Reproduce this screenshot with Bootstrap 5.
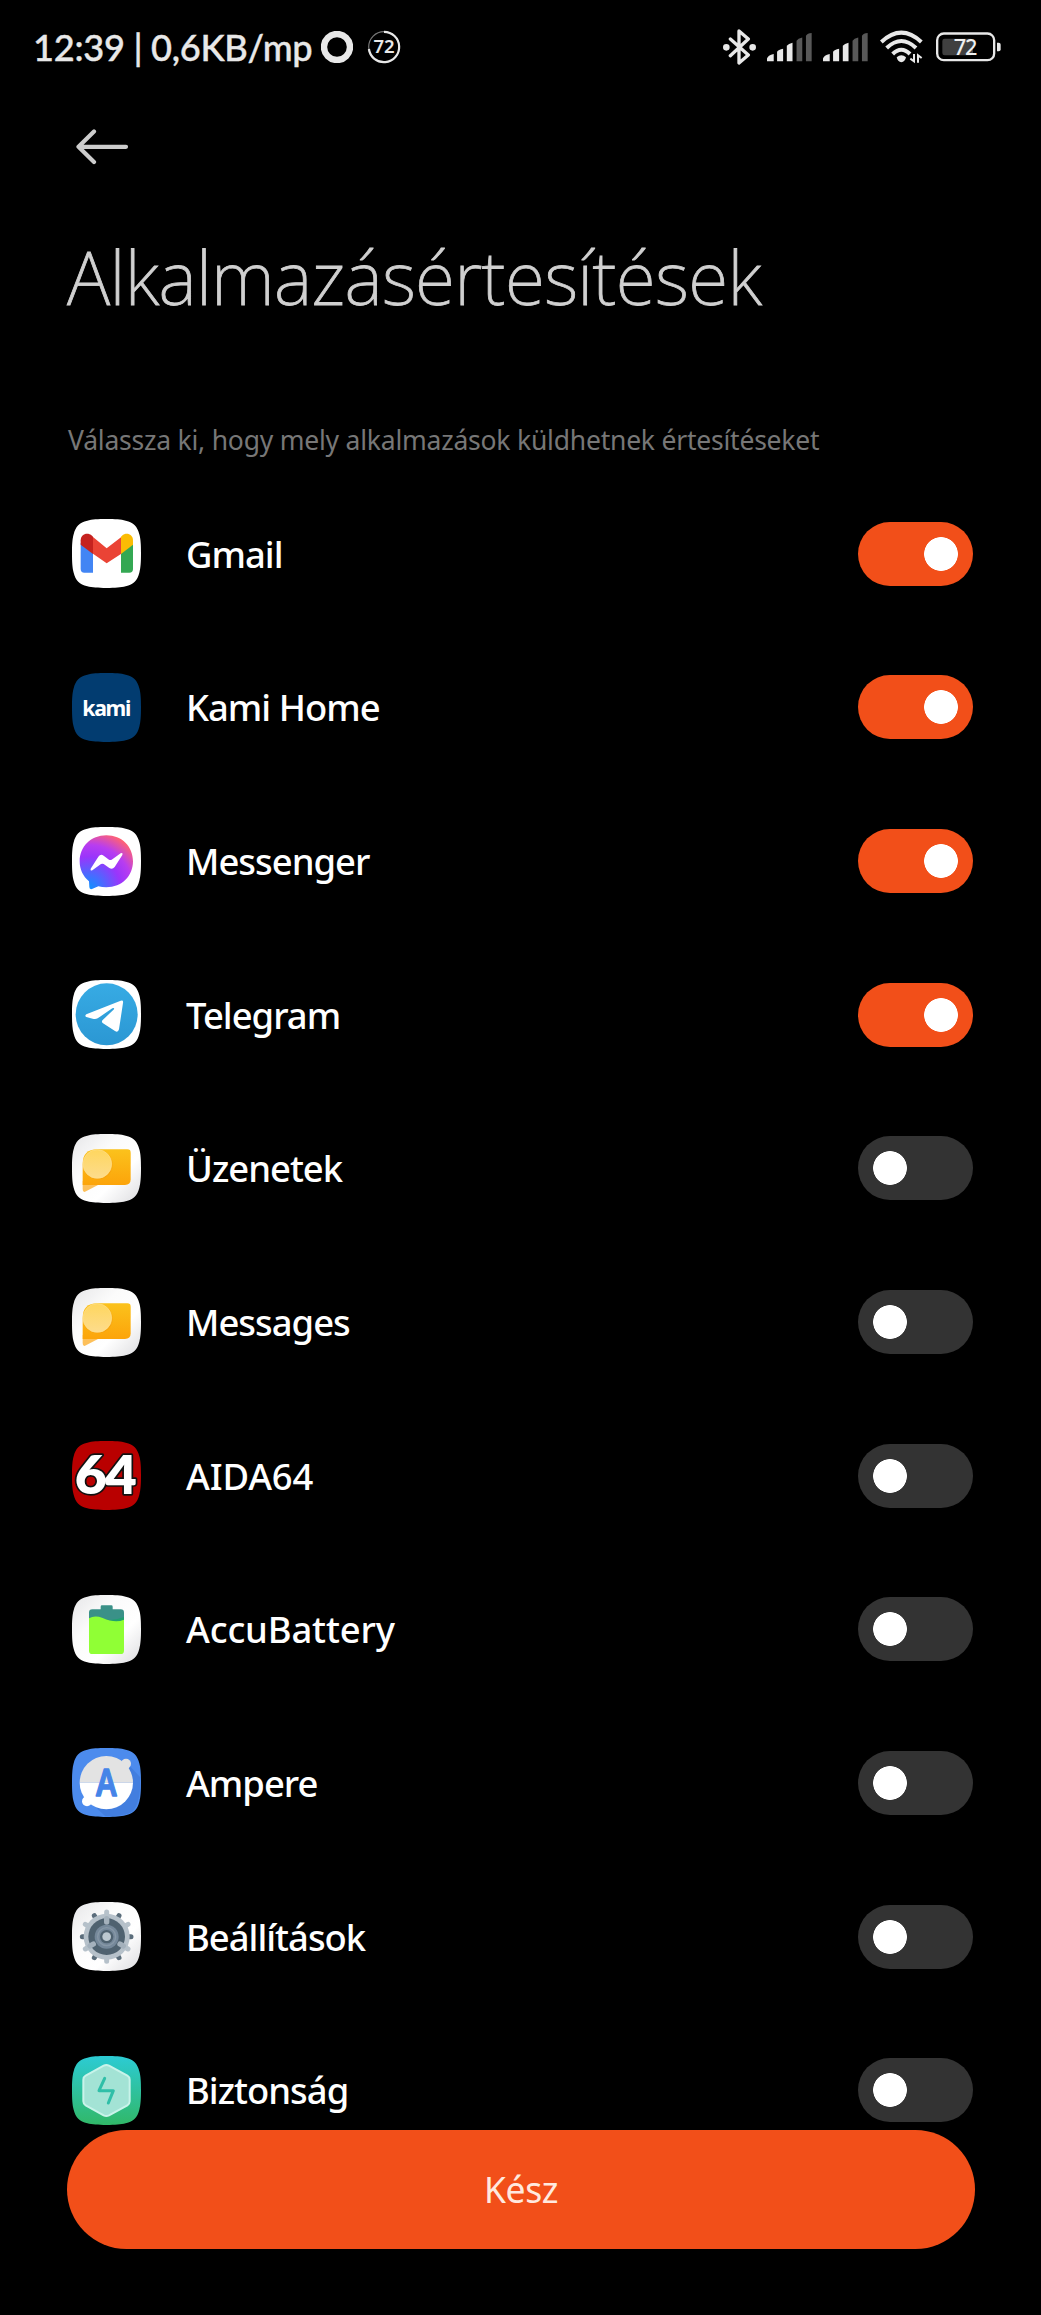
<!DOCTYPE html>
<html lang="hu">

<head>
    <meta charset="UTF-8">
    <meta name="viewport" content="width=device-width, initial-scale=1.0">
    <title>Alkalmazásértesítések</title>
    <link href="https://cdn.jsdelivr.net/npm/bootstrap@5.3.3/dist/css/bootstrap.min.css" rel="stylesheet">
    <style>
        body {
            height: 2315px;
            background: #000;
            color: #fff;
            font-family: "Noto Sans", sans-serif;
        }

        svg {
            display: block;
            flex: none;
        }

        .status-bar {
            height: 94px;
            padding: 0 40px 0 33px;
            color: #e8e8e8;
        }

        .status-text {
            width: 280px;
            font: 500 36.2px/1 Lato, sans-serif;
            letter-spacing: -.3px;
            white-space: pre;
            -webkit-text-stroke: .4px #e8e8e8;
        }

        .ring-icon {
            margin-left: 8px;
        }

        .charge-icon {
            margin-left: 14px;
        }

        .signal-icon {
            margin-left: 11px;
        }

        .wifi-icon {
            margin-left: 11.5px;
        }

        .battery-icon {
            margin-left: 13.5px;
        }

        .page-head {
            height: 383px;
            padding: 35px 67px 0;
        }

        .back-btn {
            padding: 0 0 0 8px;
            line-height: 1;
        }

        .page-title {
            margin: 62px 0 0;
            font-size: 73.2px;
            font-weight: 200;
            line-height: 100px;
            letter-spacing: -.67px;
            color: #d0d0d0;
            -webkit-text-stroke: .8px #d0d0d0;
        }

        .page-hint {
            margin: 95px 0 0 1px;
            font-size: 26.5px;
            line-height: 36px;
            letter-spacing: -.22px;
            color: #777;
        }

        .app-list {
            height: 1653px;
        }

        .app-row {
            height: 153.65px;
            padding: 0 68px 0 72px;
        }

        .app-row svg {
            width: 69px;
            height: 69px;
        }

        .app-name {
            margin-left: 45px;
            font-size: 36.4px;
            font-weight: 500;
            line-height: 50px;
            letter-spacing: -.98px;
        }

        .app-name.wide {
            letter-spacing: -.15px;
        }

        .form-switch .app-switch {
            width: 115px;
            height: 64px;
            margin: 0;
            border: 0;
            border-radius: 32px;
            background-color: #333;
            background-image: radial-gradient(circle at 32px 32px, #fff 16.5px, transparent 17.2px);
            background-position: 0 0;
            background-size: 115px 64px;
        }

        .form-switch .app-switch:checked {
            background-color: #f24f19;
            background-image: radial-gradient(circle at 83px 32px, #fff 16.5px, transparent 17.2px);
            background-position: 0 0;
        }

        .btn-done {
            height: 118.5px;
            margin: 0 66px 0 67px;
            border: 0;
            background: #f24f19;
            color: #ffe9df;
            font-size: 35.5px;
            letter-spacing: -.4px;
        }
    </style>
</head>

<body class="d-flex flex-column overflow-hidden">

    <svg width="0" height="0" class="position-absolute">
        <defs>
            <path id="tile" d="M0 103.5C0 78 1 60 5 46 11 22 22 11 46 5 60 1 78 0 103.5 0S147 1 161 5C185 11 196 22 202 46 206 60 207 78 207 103.5S206 147 202 161C196 185 185 196 161 202 147 206 129 207 103.5 207S60 206 46 202C22 196 11 185 5 161 1 147 0 129 0 103.5Z" />
            <linearGradient id="gTile" x1="0" y1="0" x2="1" y2="1">
                <stop offset="0" stop-color="#e6e6e8" />
                <stop offset=".35" stop-color="#fbfbfb" />
                <stop offset=".65" stop-color="#fff" />
                <stop offset="1" stop-color="#dcdcdf" />
            </linearGradient>
            <linearGradient id="gBubble" x1="0" y1="0" x2="0" y2="1">
                <stop offset="0" stop-color="#fbc21c" />
                <stop offset="1" stop-color="#fca40a" />
            </linearGradient>
            <linearGradient id="gCoin" x1="0" y1="0" x2="0" y2="1">
                <stop offset="0" stop-color="#fed65f" />
                <stop offset="1" stop-color="#fddc8c" />
            </linearGradient>
            <radialGradient id="gMsgr" cx=".17" cy="1" r="1.1">
                <stop offset="0" stop-color="#0a94ff" />
                <stop offset=".25" stop-color="#4a6aff" />
                <stop offset=".55" stop-color="#9a35fb" />
                <stop offset=".75" stop-color="#b83df0" />
                <stop offset="1" stop-color="#ff6273" />
            </radialGradient>
            <linearGradient id="gTg" x1="0" y1="0" x2="0" y2="1">
                <stop offset="0" stop-color="#37abe4" />
                <stop offset="1" stop-color="#2b97d3" />
            </linearGradient>
            <linearGradient id="gSec" x1="0" y1="0" x2="0" y2="1">
                <stop offset="0" stop-color="#2ccbd4" />
                <stop offset="1" stop-color="#31b868" />
            </linearGradient>
            <symbol id="chat" viewBox="0 0 207 207">
                <use href="#tile" fill="url(#gTile)" />
                <path d="M32 140V165Q32 178 42 172L78 153Z" fill="#fdc05a" />
                <path d="M76 46H166Q176 46 176 56V136Q176 153 159 153H32V90Q32 46 76 46Z" fill="url(#gBubble)" />
                <circle cx="78" cy="92" r="44" fill="#f19a10" opacity=".45" />
                <circle cx="76" cy="90" r="43" fill="url(#gCoin)" stroke="#ffe08a" stroke-width="2" />
            </symbol>
            <symbol id="signal" viewBox="0 0 134 86">
                <path d="M0 84V76Q2 66 20 62V84ZM30 84V56Q34 50 48 47V84ZM59 84V38Q64 32 76 29V84Z" fill="#e8e8e8" />
                <path d="M88 84V23Q92 16 105 13V84ZM116 84V8Q120 1 133 0V84Z" fill="#585858" />
            </symbol>
        </defs>
    </svg>

    <!-- Status bar -->
    <div class="status-bar d-flex align-items-center">
        <span class="status-text">12:39 | 0,6KB/mp</span>
        <svg class="ring-icon" width="32" height="32" viewBox="0 0 32 32">
            <circle cx="16" cy="16" r="13" fill="none" stroke="#e8e8e8" stroke-width="6.4" />
        </svg>
        <svg class="charge-icon" width="34" height="34" viewBox="0 0 34 34">
            <circle cx="17" cy="17" r="15.3" fill="none" stroke="#777" stroke-width="1.2" />
            <path d="M17 1.8A15.2 15.2 0 1 1 1.9 19" fill="none" stroke="#e8e8e8" stroke-width="2.2" />
            <text x="17" y="23.4" text-anchor="middle" font-family="Noto Sans" font-size="18.5" font-weight="600" textLength="21" fill="#e8e8e8">72</text>
        </svg>

        <svg class="ms-auto" width="33" height="36" viewBox="0 0 99 108" fill="none" stroke="#e8e8e8" stroke-width="10" stroke-linejoin="round" stroke-linecap="round">
            <path d="M22 30L76 78 48 102V6L76 30 22 80" />
            <circle cx="10" cy="55" r="5" fill="#e8e8e8" />
            <circle cx="89" cy="55" r="5" fill="#e8e8e8" />
        </svg>
        <svg class="signal-icon" width="45" height="29"><use href="#signal" /></svg>
        <svg class="signal-icon" width="45" height="29"><use href="#signal" /></svg>
        <svg class="wifi-icon" width="43" height="34" viewBox="0 0 129 102">
            <g fill="none" stroke="#e8e8e8" stroke-width="12">
                <path d="M4 36Q64 -20 124 36" />
                <path d="M20 54Q64 12 108 54" />
                <path d="M38 72Q64 46 90 72" />
            </g>
            <path d="M50 82Q64 70 78 82Q75 95 64 97 53 95 50 82Z" fill="#e8e8e8" />
            <path d="M102 72V94L91 86M114 98V76L125 84" fill="none" stroke="#e8e8e8" stroke-width="6" />
        </svg>
        <svg class="battery-icon" width="65" height="30" viewBox="0 0 195 90">
            <rect x="3.5" y="4.5" width="171" height="80" rx="20" fill="none" stroke="#e8e8e8" stroke-width="7" />
            <rect x="19" y="20" width="92" height="50" rx="7" fill="#404040" />
            <path d="M183 32H188Q194 32 194 38V52Q194 58 188 58H183Z" fill="#e8e8e8" />
            <text x="89" y="70" text-anchor="middle" font-family="Noto Sans" font-size="65" font-weight="500" textLength="71" fill="#f0f0f0">72</text>
        </svg>
    </div>

    <!-- Header -->
    <header class="page-head">
        <button type="button" class="btn back-btn d-block border-0" aria-label="Vissza">
            <svg width="54" height="36" viewBox="0 0 54 36" fill="none" stroke="#ccc" stroke-width="4.2" stroke-linecap="round" stroke-linejoin="round">
                <path d="M51 17.8H3.5M19 2.5L3.5 17.8 19 33" />
            </svg>
        </button>
        <h1 class="page-title text-nowrap">Alkalmazásértesítések</h1>
        <p class="page-hint text-nowrap">Válassza ki, hogy mely alkalmazások küldhetnek értesítéseket</p>
    </header>

    <!-- App list -->
    <main class="app-list overflow-hidden flex-shrink-0">
        <label class="app-row d-flex align-items-center">
            <svg viewBox="0 0 207 207">
                <use href="#tile" fill="#fff" />
                <path d="M26 72L63 99V161H37Q26 161 26 150Z" fill="#4285f4" />
                <path d="M147 99L183 72V150Q183 161 172 161H147Z" fill="#34a853" />
                <path d="M63 54L104 88 148 54V104L104 133 63 104Z" fill="#ea4335" />
                <path d="M26 77V64C26 46 46 38 60 50L63 53V105Z" fill="#c5221f" />
                <path d="M183 77V64C183 46 163 38 150 50L147 53V105Z" fill="#fbbc04" />
            </svg>
            <span class="app-name">Gmail</span>
            <span class="form-check form-switch ms-auto p-0 m-0"><input class="form-check-input app-switch" type="checkbox" role="switch" checked></span>
        </label>
        <label class="app-row d-flex align-items-center">
            <svg viewBox="0 0 207 207">
                <use href="#tile" fill="#023c70" />
                <text x="31" y="130" font-family="Noto Sans" font-size="64" font-weight="700" letter-spacing="-4" textLength="143" lengthAdjust="spacingAndGlyphs" fill="#fff">kami</text>
            </svg>
            <span class="app-name">Kami Home</span>
            <span class="form-check form-switch ms-auto p-0 m-0"><input class="form-check-input app-switch" type="checkbox" role="switch" checked></span>
        </label>
        <label class="app-row d-flex align-items-center">
            <svg viewBox="0 0 207 207">
                <use href="#tile" fill="#fff" />
                <path d="M103 25C150 25 183 59 183 103S150 181 103 181Q90 181 79 178L60 186Q52 188 52 180L51 163C33 148 23 127 23 103 23 59 57 25 103 25Z" fill="url(#gMsgr)" />
                <path d="M56 125L79 89Q86 80 95 86L111 98Q115 100 119 98L146 79Q154 76 151 84L128 120Q121 129 112 123L95 111Q91 109 87 111L61 130Q54 133 56 125Z" fill="#fff" />
            </svg>
            <span class="app-name">Messenger</span>
            <span class="form-check form-switch ms-auto p-0 m-0"><input class="form-check-input app-switch" type="checkbox" role="switch" checked></span>
        </label>
        <label class="app-row d-flex align-items-center">
            <svg viewBox="0 0 207 207">
                <use href="#tile" fill="#fff" />
                <circle cx="104" cy="103" r="93" fill="url(#gTg)" />
                <path d="M43 103L146 62Q155 59 153 69L141 148Q138 159 129 153L93 130Q87 125 92 120L126 88Q128 82 121 85L77 115Q70 119 62 116L43 111Q37 107 43 103Z" fill="#fff" />
            </svg>
            <span class="app-name">Telegram</span>
            <span class="form-check form-switch ms-auto p-0 m-0"><input class="form-check-input app-switch" type="checkbox" role="switch" checked></span>
        </label>
        <label class="app-row d-flex align-items-center">
            <svg><use href="#chat" /></svg>
            <span class="app-name">Üzenetek</span>
            <span class="form-check form-switch ms-auto p-0 m-0"><input class="form-check-input app-switch" type="checkbox" role="switch"></span>
        </label>
        <label class="app-row d-flex align-items-center">
            <svg><use href="#chat" /></svg>
            <span class="app-name">Messages</span>
            <span class="form-check form-switch ms-auto p-0 m-0"><input class="form-check-input app-switch" type="checkbox" role="switch"></span>
        </label>
        <label class="app-row d-flex align-items-center">
            <svg viewBox="0 0 207 207">
                <use href="#tile" fill="#b90000" />
                <text x="8" y="160" font-family="Lato" font-size="158" font-weight="800" letter-spacing="-6" textLength="180" lengthAdjust="spacingAndGlyphs" fill="#fff" stroke="#111" stroke-width="10" stroke-linejoin="round" paint-order="stroke">64</text>
            </svg>
            <span class="app-name wide">AIDA64</span>
            <span class="form-check form-switch ms-auto p-0 m-0"><input class="form-check-input app-switch" type="checkbox" role="switch"></span>
        </label>
        <label class="app-row d-flex align-items-center">
            <svg viewBox="0 0 207 207">
                <use href="#tile" fill="url(#gTile)" />
                <path d="M51 78V53Q51 43 61 43H86V35Q86 31 90 31H118Q122 31 122 35V43H146Q156 43 156 53V78Z" fill="#3a9188" />
                <path d="M80 66Q110 84 156 66V90H80Z" fill="#20a070" />
                <path d="M51 70Q68 60 92 69 130 86 156 74V167Q156 177 146 177H61Q51 177 51 167Z" fill="#90ff35" />
            </svg>
            <span class="app-name wide">AccuBattery</span>
            <span class="form-check form-switch ms-auto p-0 m-0"><input class="form-check-input app-switch" type="checkbox" role="switch"></span>
        </label>
        <label class="app-row d-flex align-items-center">
            <svg viewBox="0 0 207 207">
                <use href="#tile" fill="#4c8bed" />
                <path d="M174 55L205 88Q206 168 180 192 150 206 100 205L60 168Z" fill="#3c76d6" opacity=".6" />
                <circle cx="162" cy="47" r="15" fill="#e3e3e3" />
                <circle cx="45" cy="160" r="15" fill="#fff" />
                <path d="M23 104A80 80 0 0 1 183 104Z" fill="#e3e3e3" />
                <path d="M23 104A80 80 0 0 0 183 104Z" fill="#fff" />
                <text x="103" y="144" text-anchor="middle" font-family="Noto Sans" font-size="111" font-weight="600" textLength="62" lengthAdjust="spacingAndGlyphs" fill="#4584e8" stroke="#4584e8" stroke-width="4" stroke-linejoin="round">A</text>
            </svg>
            <span class="app-name">Ampere</span>
            <span class="form-check form-switch ms-auto p-0 m-0"><input class="form-check-input app-switch" type="checkbox" role="switch"></span>
        </label>
        <label class="app-row d-flex align-items-center">
            <svg viewBox="0 0 207 207">
                <use href="#tile" fill="url(#gTile)" />
                <g fill="none" stroke-linecap="round" stroke-width="15">
                    <path d="M31 104H177M67 41L141 167M141 41L67 167" stroke="#5b6d7b" />
                    <path d="M104 30V178M40 67L168 141M168 67L40 141" stroke="#b6c1ca" />
                </g>
                <circle cx="104" cy="104" r="69" fill="#b6c1ca" />
                <circle cx="104" cy="104" r="55" fill="#4f6270" />
                <path d="M104 50V60M54 132L64 126M154 132L144 126" stroke="#a4b1bc" stroke-width="16" stroke-linecap="round" />
                <circle cx="104" cy="104" r="36" fill="#75889a" />
                <circle cx="104" cy="104" r="27" fill="none" stroke="#8798a7" stroke-width="4" />
                <circle cx="104" cy="104" r="20" fill="#4f6270" />
                <circle cx="104" cy="104" r="13" fill="#bcc8d0" />
            </svg>
            <span class="app-name">Beállítások</span>
            <span class="form-check form-switch ms-auto p-0 m-0"><input class="form-check-input app-switch" type="checkbox" role="switch"></span>
        </label>
        <label class="app-row d-flex align-items-center">
            <svg viewBox="0 0 207 207">
                <use href="#tile" fill="url(#gSec)" />
                <path d="M95 29Q103 25 111 29L166 59Q173 63 173 71V136Q173 144 166 148L111 178Q103 182 95 178L41 148Q34 144 34 136V71Q34 63 41 59Z" fill="#a3e3d5" stroke="#c9f3ea" stroke-width="6" />
                <path d="M98 67L81 104H124L109 141" fill="none" stroke="#2fbfa8" stroke-width="9" stroke-linecap="round" stroke-linejoin="round" />
            </svg>
            <span class="app-name">Biztonság</span>
            <span class="form-check form-switch ms-auto p-0 m-0"><input class="form-check-input app-switch" type="checkbox" role="switch"></span>
        </label>
    </main>

    <button type="button" class="btn btn-done rounded-pill flex-shrink-0">Kész</button>

    <script src="https://cdn.jsdelivr.net/npm/bootstrap@5.3.3/dist/js/bootstrap.bundle.min.js"></script>
</body>

</html>
